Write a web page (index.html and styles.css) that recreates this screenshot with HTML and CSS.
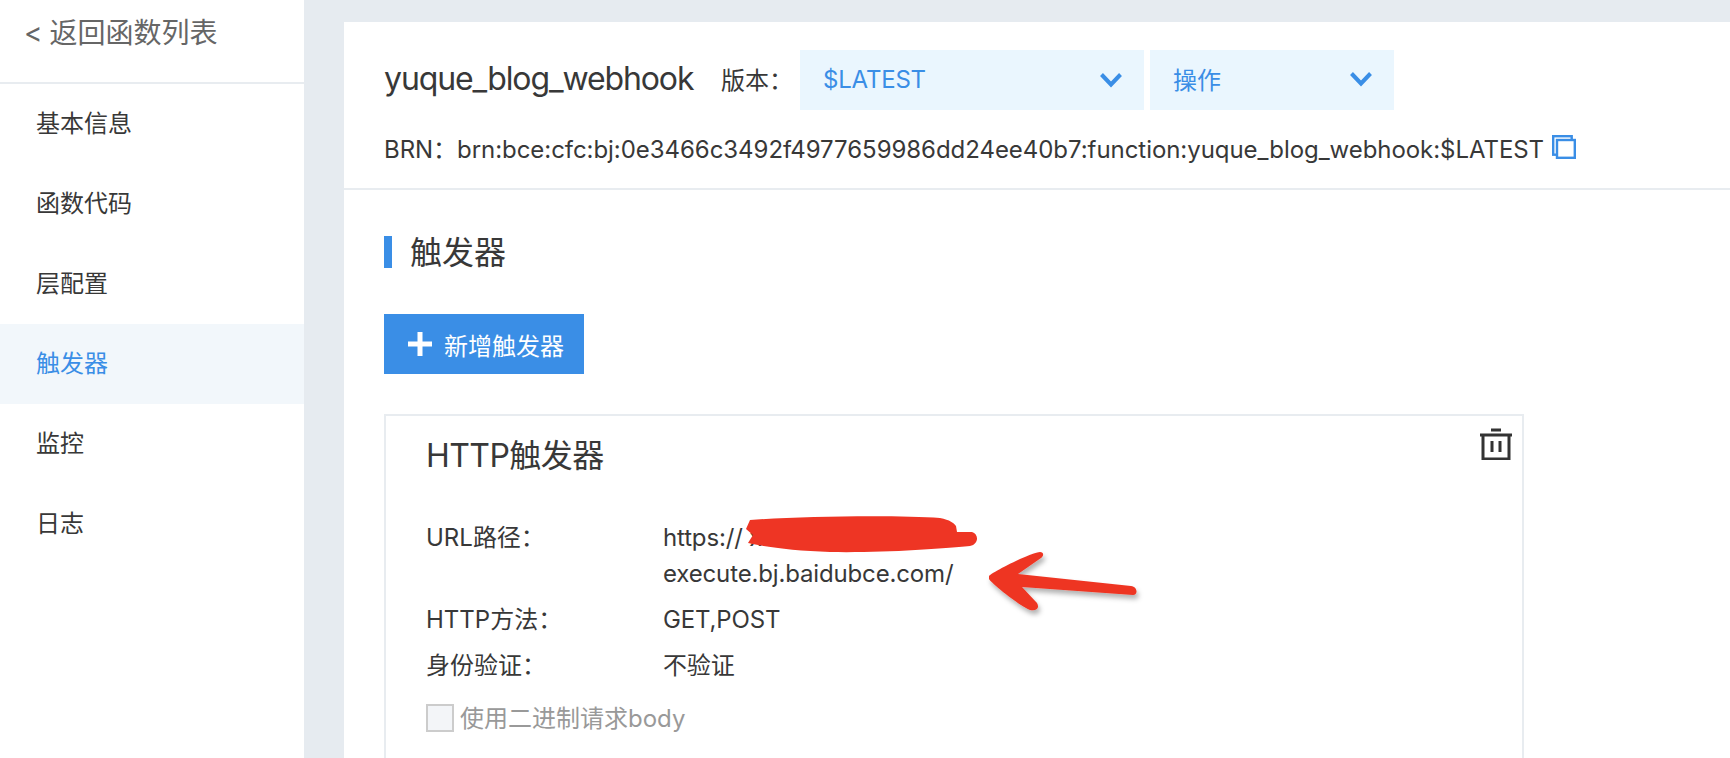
FILE: index.html
```html
<!DOCTYPE html>
<html lang="zh-CN">
<head>
    <meta charset="UTF-8">
    <title>yuque_blog_webhook</title>
    <link rel="stylesheet" href="styles.css">
</head>
<body>
    <div class="sidebar">
        <div class="back">&lt; 返回函数列表</div>
        <ul class="menu">
            <li>基本信息</li>
            <li>函数代码</li>
            <li>层配置</li>
            <li class="active">触发器</li>
            <li>监控</li>
            <li>日志</li>
        </ul>
    </div>

    <div class="main">
        <div class="panel">
            <div class="panel-head">
                <div class="title-row">
                    <h1 class="fn-name">yuque_blog_webhook</h1>
                    <span class="version-label">版本：</span>
                    <div class="dropdown dropdown-version">
                        <span>$LATEST</span>
                        <svg class="chevron" viewBox="0 0 22 16"><path d="M1.5 2.5 11 12.5 20.5 2.5" /></svg>
                    </div>
                    <div class="dropdown dropdown-action">
                        <span>操作</span>
                        <svg class="chevron" viewBox="0 0 22 16"><path d="M1.5 2.5 11 12.5 20.5 2.5" /></svg>
                    </div>
                </div>
                <div class="brn-row">
                    <span>BRN：brn:bce:cfc:bj:0e3466c3492f4977659986dd24ee40b7:function:yuque_blog_webhook:$LATEST</span>
                    <svg class="copy-icon" viewBox="0 0 24 24">
                        <rect x="1.2" y="1.2" width="18.5" height="18.5" />
                        <rect x="5" y="5" width="17.8" height="17.8" />
                    </svg>
                </div>
            </div>

            <div class="panel-body">
                <h2 class="section-title">触发器</h2>
                <button class="add-btn">
                    <svg class="plus-icon" viewBox="0 0 24 24"><path d="M12 0V24M0 12H24" /></svg>
                    新增触发器
                </button>

                <div class="card">
                    <svg class="trash-icon" viewBox="0 0 32 32">
                        <path d="M11 2H21M0 7H32M3 7V31H29V7M12 13V24M20 13V24" />
                    </svg>
                    <h3 class="card-title">HTTP触发器</h3>
                    <div class="info">
                        <div class="info-label">URL路径：</div>
                        <div class="info-value">https://&nbsp;xxxxxxxxx.cfc-<br>execute.bj.baidubce.com/</div>
                        <div class="info-label">HTTP方法：</div>
                        <div class="info-value">GET,POST</div>
                        <div class="info-label">身份验证：</div>
                        <div class="info-value">不验证</div>
                    </div>
                    <label class="check-row">
                        <span class="checkbox"></span>
                        <span class="check-text">使用二进制请求body</span>
                    </label>
                </div>
            </div>
        </div>
    </div>

    <!-- red pen marks on top of the screenshot -->
    <svg class="markup" viewBox="0 0 1730 758">
        <defs>
            <filter id="pen-shadow" x="-10%" y="-20%" width="120%" height="150%">
                <feDropShadow dx="2" dy="4" stdDeviation="2.5" flood-color="#000" flood-opacity="0.3" />
            </filter>
        </defs>
        <path class="scribble" d="M750 520C800 516 900 515 940 518C950 520 954 523 956 526L957 532L972 532C979 534 979 544 970 546C940 549 880 553 830 552C795 551 765 547 748 543L753 535L746 529Z" />
        <path class="arrow" filter="url(#pen-shadow)" d="M989 576C992 572 1030 553 1040 552C1044 552 1044 556 1041 558L1018 574L1131 586C1138 587 1138 595 1133 595L1022 587L1037 603C1040 608 1036 611 1030 610C1020 606 992 584 989 579Z" />
    </svg>
</body>
</html>
```

FILE: styles.css
```css
* {
    box-sizing: border-box;
}
body {
    margin: 0;
    display: flex;
    height: 758px;
    overflow: hidden;
    position: relative;
    font-family: Inter, "Noto Sans CJK SC", sans-serif;
    font-size: 24px;
    color: #383838;
    background: #e6ebf0;
}
.sidebar {
    width: 304px;
    flex-shrink: 0;
    background: #fff;
}
.back {
    height: 84px;
    padding: 14px 0 0 24px;
    font-size: 28px;
    line-height: 38px;
    word-spacing: -1px;
    color: #666;
    border-bottom: 2px solid #e8ecf0;
}
.menu {
    list-style: none;
    margin: 0;
    padding: 0;
}
.menu li {
    height: 80px;
    line-height: 80px;
    padding-left: 36px;
}
.menu li.active {
    background: #f2f7fb;
    color: #3a8ee6;
}
.main {
    flex: 1;
    padding: 22px 0 0 40px;
}
.panel {
    background: #fff;
    height: 100%;
}
.panel-head {
    height: 168px;
    padding: 28px 0 0 40px;
    border-bottom: 2px solid #e8ecf0;
}
.title-row {
    display: flex;
    align-items: center;
    height: 60px;
}
.fn-name {
    width: 311px;
    margin: 0 26px 4px 0;
    font-size: 32px;
    font-weight: 400;
    letter-spacing: -1.1px;
}
.version-label {
    width: 79px;
    margin-bottom: 4px;
}
.dropdown {
    display: flex;
    align-items: center;
    justify-content: space-between;
    height: 60px;
    padding: 0 22px 3px 23px;
    background: #eaf6fe;
    color: #3a8ee6;
}
.dropdown-version {
    width: 344px;
    margin-right: 6px;
    padding-bottom: 1px;
    letter-spacing: -0.2px;
}
.dropdown-action {
    width: 244px;
}
.chevron {
    width: 22px;
    height: 16px;
    fill: none;
    stroke: #3a8ee6;
    stroke-width: 4;
}
.brn-row {
    display: flex;
    align-items: center;
    margin-top: 12px;
    height: 50px;
    letter-spacing: -0.05px;
}
.copy-icon {
    width: 24px;
    height: 24px;
    margin-left: 8px;
    fill: #fff;
    stroke: #3a8ee6;
    stroke-width: 2.4;
}
.panel-body {
    padding: 46px 0 0 40px;
}
.section-title {
    margin: 0;
    padding-left: 18px;
    height: 32px;
    line-height: 34px;
    font-size: 32px;
    font-weight: 400;
    border-left: 8px solid #3a8ee6;
}
.add-btn {
    display: flex;
    align-items: center;
    gap: 12px;
    width: 200px;
    height: 60px;
    margin-top: 46px;
    padding: 0 0 0 24px;
    border: none;
    background: #3a8ee6;
    color: #fff;
    font: inherit;
}
.plus-icon {
    width: 24px;
    height: 24px;
    stroke: #fff;
    stroke-width: 5;
}
.card {
    position: relative;
    width: 1140px;
    height: 400px;
    margin-top: 40px;
    padding: 21px 0 0 40px;
    border: 2px solid #e8ecf0;
}
.trash-icon {
    position: absolute;
    top: 12px;
    right: 10px;
    width: 32px;
    height: 32px;
    fill: none;
    stroke: #333;
    stroke-width: 3;
}
.card-title {
    margin: 0 0 45px;
    font-size: 32px;
    line-height: 38px;
    font-weight: 400;
    letter-spacing: -0.55px;
}
.info {
    display: grid;
    grid-template-columns: 237px 400px;
    row-gap: 10px;
    line-height: 36px;
}
.info-value {
    letter-spacing: -0.15px;
}
.check-row {
    display: flex;
    align-items: center;
    gap: 6px;
    margin-top: 20px;
    height: 28px;
    color: #999;
}
.check-text {
    margin-bottom: 3px;
}
.checkbox {
    width: 28px;
    height: 28px;
    background: #f3f5f8;
    border: 2px solid #ccc;
}
.markup {
    position: absolute;
    top: 0;
    left: 0;
    width: 1730px;
    height: 758px;
    pointer-events: none;
}
.scribble {
    fill: #ee3524;
}
.arrow {
    fill: #ee3524;
}
```
